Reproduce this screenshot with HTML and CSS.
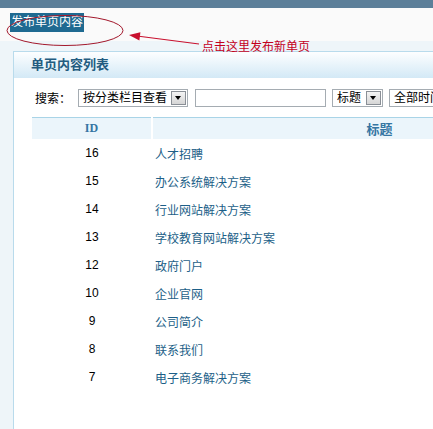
FILE: index.html
```html
<!DOCTYPE html>
<html lang="zh-CN">
<head>
    <meta charset="UTF-8">
    <title>单页内容列表</title>
    <link rel="stylesheet" href="styles.css">
</head>
<body>
    <div class="topbar"></div>
    <div class="toolbar">
        <a class="publish" href="#">发布单页内容</a>
    </div>

    <div class="main">
        <div class="panel">
            <div class="panel-head">单页内容列表</div>
            <div class="panel-body">
                <div class="search">
                    <span class="search-label">搜索：</span>
                    <span class="select sel-cat"><span class="sel-text">按分类栏目查看</span><span class="sel-btn"></span></span>
                    <span class="text-input"></span>
                    <span class="select sel-field"><span class="sel-text">标题</span><span class="sel-btn"></span></span>
                    <span class="select sel-time"><span class="sel-text">全部时间</span><span class="sel-btn"></span></span>
                </div>

                <table class="list">
                    <thead>
                        <tr>
                            <th class="col-id">ID</th>
                            <th class="col-title">标题</th>
                        </tr>
                    </thead>
                    <tbody>
                        <tr><td class="col-id">16</td><td><a href="#">人才招聘</a></td></tr>
                        <tr><td class="col-id">15</td><td><a href="#">办公系统解决方案</a></td></tr>
                        <tr><td class="col-id">14</td><td><a href="#">行业网站解决方案</a></td></tr>
                        <tr><td class="col-id">13</td><td><a href="#">学校教育网站解决方案</a></td></tr>
                        <tr><td class="col-id">12</td><td><a href="#">政府门户</a></td></tr>
                        <tr><td class="col-id">10</td><td><a href="#">企业官网</a></td></tr>
                        <tr><td class="col-id">9</td><td><a href="#">公司简介</a></td></tr>
                        <tr><td class="col-id">8</td><td><a href="#">联系我们</a></td></tr>
                        <tr><td class="col-id">7</td><td><a href="#">电子商务解决方案</a></td></tr>
                    </tbody>
                </table>
            </div>
        </div>
    </div>

    <!-- annotation drawn over the screenshot -->
    <svg class="annot" width="433" height="60" viewBox="0 0 433 60">
        <ellipse cx="65" cy="30.5" rx="58" ry="15" fill="none" stroke="#a3182c" stroke-width="1"/>
        <line x1="199" y1="44" x2="137" y2="36" stroke="#c8102e" stroke-width="1.2"/>
        <polygon points="129,35 140.4,32.2 139.4,40.4" fill="#c8102e"/>
    </svg>
    <span class="note">点击这里发布新单页</span>
</body>
</html>
```

FILE: styles.css
```css
html, body {
    margin: 0;
    padding: 0;
    height: 100%;
}

body {
    font-family: "Liberation Sans", "Noto Sans CJK SC", sans-serif;
    font-size: 12px;
    background: #fafafa;
    overflow: hidden;
    position: relative;
    display: flex;
    flex-direction: column;
}

.topbar {
    height: 8px;
    background: #5c7f99;
}

.toolbar {
    height: 33px;
    padding: 5px 0 0 10px;
    box-sizing: border-box;
}

.publish {
    display: inline-block;
    height: 19px;
    line-height: 19px;
    padding: 0 1px;
    background: #1f6a91;
    color: #fff;
    text-decoration: none;
    font-size: 12px;
}

.main {
    flex: 1;
    background: #eef5f9;
    padding: 10px 0 0 13px;
    display: flex;
}

.panel {
    width: 700px;
    flex-shrink: 0;
    background: #fff;
    border-left: 1px solid #b9dbec;
    border-top: 1px solid #b9dbec;
}

.panel-head {
    height: 26px;
    line-height: 26px;
    padding-left: 17px;
    font-size: 13px;
    font-weight: bold;
    color: #235c80;
    background: linear-gradient(#fdfeff, #d3e9f6);
}

.panel-body {
    padding: 10px 0 0 18px;
}

.search {
    display: flex;
    align-items: center;
    height: 19px;
    padding-left: 3px;
}

.search-label {
    width: 43px;
    color: #000;
}

.select {
    display: inline-flex;
    align-items: center;
    height: 18px;
    box-sizing: border-box;
    border: 1px solid #a5acb2;
    background: #fff;
    padding: 0 1px 0 4px;
    margin-right: 6px;
}

.sel-text {
    flex: 1;
    line-height: 16px;
    color: #000;
    white-space: nowrap;
}

.sel-btn {
    width: 15px;
    height: 14px;
    box-sizing: border-box;
    border: 1px solid #8a8f96;
    background: linear-gradient(#f4f4f4, #d6d6d6);
    position: relative;
    margin-left: 3px;
}

.sel-btn::after {
    content: "";
    position: absolute;
    left: 3px;
    top: 4px;
    border-left: 3.5px solid transparent;
    border-right: 3.5px solid transparent;
    border-top: 4px solid #000;
}

.sel-cat {
    width: 110px;
    margin-right: 7px;
}

.text-input {
    width: 131px;
    height: 18px;
    box-sizing: border-box;
    border: 1px solid #a5acb2;
    background: #fff;
    margin-right: 6px;
}

.sel-field {
    width: 51px;
}

.sel-time {
    width: 90px;
}

.list {
    margin-top: 10px;
    width: 574px;
    border-collapse: collapse;
}

.list th {
    height: 21px;
    padding: 0;
    border-top: 1px solid #a9d4e7;
    background: #ebf5fb;
    color: #3576a3;
    font-family: "Liberation Serif", serif;
    font-size: 12px;
    font-weight: bold;
}

.list th.col-title {
    border-left: 2px solid #fff;
    font-family: "Noto Sans CJK SC", sans-serif;
    font-weight: 700;
    font-size: 13px;
}

.list td {
    height: 28px;
    padding: 0;
}

.list th.col-id,
.list td.col-id {
    width: 119px;
    text-align: center;
}

.list td.col-id {
    color: #000;
    font-family: "Liberation Sans", sans-serif;
    font-size: 12px;
}

.list td a {
    display: block;
    padding-left: 3px;
    color: #1d5f88;
    text-decoration: none;
}

.annot {
    position: absolute;
    left: 0;
    top: 0;
    pointer-events: none;
}

.note {
    position: absolute;
    left: 202px;
    top: 37px;
    color: #c4001c;
    font-size: 12px;
    white-space: nowrap;
}
```
